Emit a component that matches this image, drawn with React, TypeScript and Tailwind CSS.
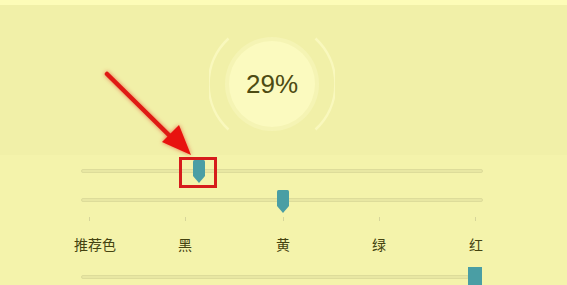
import React from 'react';

const Thumb = ({ left, top }: { left: number; top: number }) => (
  <svg
    className="absolute"
    style={{ left, top }}
    width="12"
    height="23"
    viewBox="0 0 12 23"
  >
    <path d="M0 1.5Q0 0 1.5 0H10.5Q12 0 12 1.5V16L6 23L0 16Z" fill="#4a9ea4" />
  </svg>
);

const Track = ({ width = 402, children }: { width?: number; children?: React.ReactNode }) => (
  <div
    className="relative ml-[81px] h-[4px] rounded-full border border-[#dddc9a] bg-[#e8e7a3]"
    style={{ width }}
  >
    {children}
  </div>
);

const labels = [
  { text: '推荐色', x: 95 },
  { text: '黑', x: 185 },
  { text: '黄', x: 283 },
  { text: '绿', x: 379 },
  { text: '红', x: 476 },
];
const ticks = [89, 185, 283, 379, 475];

export default function App() {
  return (
    <div
      className="relative h-[285px] w-[567px] overflow-hidden bg-[#f1f0a8]"
      style={{ fontFamily: '"Liberation Sans", "Noto Sans CJK SC", sans-serif' }}
    >
      <div className="h-[5px] bg-[#fdfcb8]" />

      {/* gauge */}
      <div className="flex h-[150px] justify-center pr-[23px]">
        <div className="relative mt-[16px] flex h-[126px] w-[126px] items-center justify-center">
          <svg className="absolute inset-0" width="126" height="126" viewBox="0 0 126 126">
            <path d="M19.5 17.5A62 62 0 0 0 19.5 108.5" fill="none" stroke="#f9f8bd" strokeWidth="2.5" />
            <path d="M106.5 17.5A62 62 0 0 1 106.5 108.5" fill="none" stroke="#f9f8bd" strokeWidth="2.5" />
          </svg>
          <div className="flex h-[94px] w-[94px] items-center justify-center rounded-full bg-[#f5f4b4]">
            <div className="flex h-[86px] w-[86px] items-center justify-center rounded-full bg-[#fbfabf]">
              <span className="text-[26px] leading-none text-[#4d4b12]">29%</span>
            </div>
          </div>
        </div>
      </div>

      {/* sliders */}
      <div className="h-[130px] bg-[#f4f3ab]">
        <div className="flex h-[32px] items-center">
          <Track>
            <Thumb left={111} top={-10} />
          </Track>
        </div>
        <div className="flex h-[26px] items-center">
          <Track>
            <Thumb left={195} top={-9} />
          </Track>
        </div>
        <div className="relative mt-[4px] h-[4px]">
          {ticks.map((x) => (
            <div key={x} className="absolute top-0 h-[4px] w-px bg-[#d6d59a]" style={{ left: x }} />
          ))}
        </div>
        <div className="relative mt-[14px] h-[20px]">
          {labels.map((l) => (
            <span
              key={l.text}
              className="absolute top-0 -translate-x-1/2 text-[14px] leading-[20px] text-[#444310]"
              style={{ left: l.x }}
            >
              {l.text}
            </span>
          ))}
        </div>
        <div className="mt-[20px] flex">
          <Track width={388}>
            <div className="absolute left-[386px] top-[-9px] h-[24px] w-[14px] bg-[#4a9ea4]" />
          </Track>
        </div>
      </div>

      {/* annotation */}
      <div className="absolute left-[179px] top-[157px] h-[31px] w-[38px] border-[3px] border-[#d61c1c]" />
      <svg
        className="absolute left-0 top-0"
        width="567"
        height="285"
        style={{ filter: 'drop-shadow(0 0 2px rgba(230,30,20,0.6))' }}
      >
        <line x1="107" y1="74" x2="174" y2="140" stroke="#df1a14" strokeWidth="4.5" strokeLinecap="round" />
        <polygon points="191,155 162,142 179,125" fill="#e8120f" />
      </svg>
    </div>
  );
}
